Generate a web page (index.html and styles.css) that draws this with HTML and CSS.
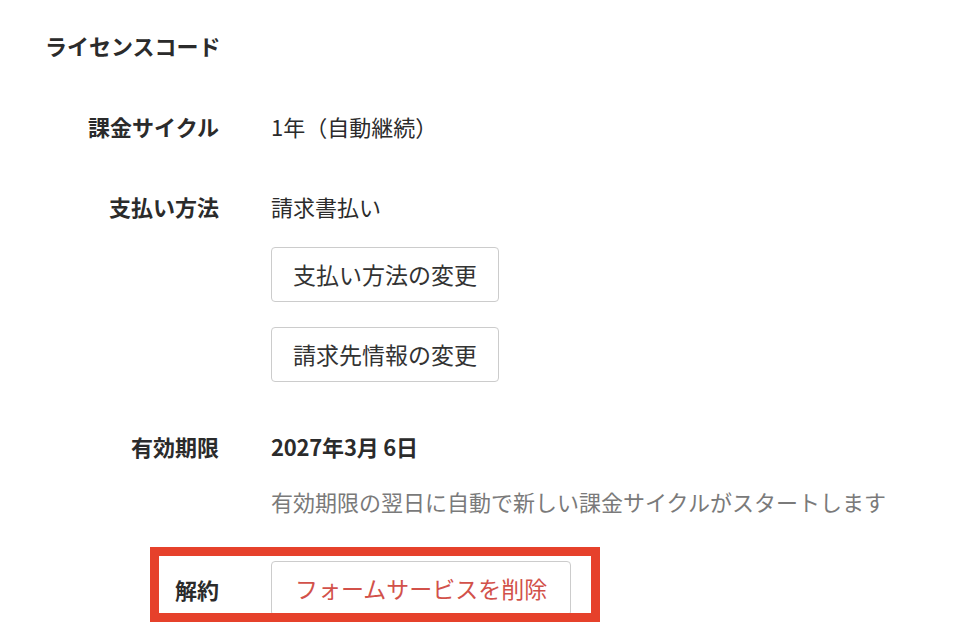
FILE: index.html
```html
<!DOCTYPE html>
<html lang="ja">
<head>
<meta charset="utf-8">
<title>ライセンス</title>
<link rel="stylesheet" href="styles.css">
</head>
<body>
<main class="page">
  <h2 class="section-title">ライセンスコード</h2>

  <div class="row row-cycle">
    <div class="label">課金サイクル</div>
    <div class="value"><span class="text">1年（自動継続）</span></div>
  </div>

  <div class="row row-payment">
    <div class="label">支払い方法</div>
    <div class="value stack">
      <span class="text">請求書払い</span>
      <button class="btn btn-first" type="button">支払い方法の変更</button>
      <button class="btn btn-second" type="button">請求先情報の変更</button>
    </div>
  </div>

  <div class="row row-expiry">
    <div class="label">有効期限</div>
    <div class="value stack">
      <span class="text strong">2027年3月 6日</span>
      <span class="text note">有効期限の翌日に自動で新しい課金サイクルがスタートします</span>
    </div>
  </div>

  <div class="row row-cancel">
    <div class="label label-cancel">解約</div>
    <div class="value">
      <button class="btn btn-danger" type="button">フォームサービスを削除</button>
    </div>
    <div class="highlight" aria-hidden="true"></div>
  </div>
</main>
</body>
</html>
```

FILE: styles.css
```css
html, body {
  margin: 0;
  padding: 0;
  background: #ffffff;
}

body {
  font-family: "Noto Sans CJK JP", "Noto Sans", "Liberation Sans", sans-serif;
  color: #2b2b2b;
  overflow: hidden;
  height: 623px;
}

.page {
  display: flex;
  flex-direction: column;
  padding-top: 29px;
}

.section-title {
  margin: 0 0 0 45px;
  font-size: 22px;
  font-weight: 700;
  line-height: 32px;
  letter-spacing: 0;
}

.row {
  display: grid;
  grid-template-columns: 219px 1fr;
  column-gap: 52px;
  align-items: start;
}

.row-cycle { margin-top: 49px; }
.row-payment { margin-top: 48px; }
.row-expiry { margin-top: 48px; }
.row-cancel {
  margin-top: 44px;
  position: relative;
  align-items: center;
}

.label {
  text-align: right;
  font-size: 22px;
  font-weight: 700;
  line-height: 32px;
  letter-spacing: 0;
}

.value {
  display: flex;
  align-items: flex-start;
}

.stack {
  flex-direction: column;
}

.text {
  font-size: 22px;
  line-height: 32px;
}

.strong {
  font-weight: 700;
  letter-spacing: -0.2px;
}

.note {
  margin-top: 23px;
  color: #7a7a7a;
  font-size: 22px;
}

.btn {
  font-family: inherit;
  font-size: 23px;
  line-height: 1;
  color: #333333;
  background: #ffffff;
  border: 1px solid #cccccc;
  border-radius: 4px;
  height: 55px;
  padding: 0 21px;
  margin: 0;
  cursor: pointer;
}

.btn-first { margin-top: 25px; }
.btn-second { margin-top: 25px; }

.btn-danger {
  color: #d2514a;
  padding: 0 23px;
  font-size: 23px;
}

.highlight {
  position: absolute;
  left: 150px;
  top: -14px;
  width: 450px;
  height: 75px;
  box-sizing: border-box;
  border: 9px solid #e6412b;
  pointer-events: none;
}
```
